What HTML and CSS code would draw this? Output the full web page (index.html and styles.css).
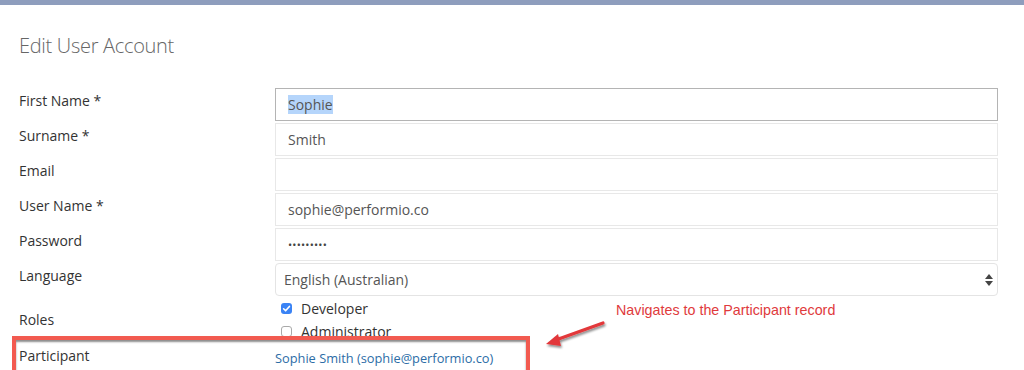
FILE: index.html
```html
<!DOCTYPE html>
<html lang="en">
<head>
    <meta charset="UTF-8">
    <title>Edit User Account</title>
    <link rel="stylesheet" href="styles.css">
</head>
<body>

<div class="topbar"></div>

<div class="page">
    <h1>Edit User Account</h1>

    <form class="user-form">
        <div class="row">
            <label>First Name *</label>
            <div class="field focused"><span class="selected">Sophie</span></div>
        </div>
        <div class="row">
            <label>Surname *</label>
            <div class="field">Smith</div>
        </div>
        <div class="row">
            <label>Email</label>
            <div class="field"></div>
        </div>
        <div class="row">
            <label>User Name *</label>
            <div class="field">sophie@performio.co</div>
        </div>
        <div class="row">
            <label>Password</label>
            <div class="field password">&bull;&bull;&bull;&bull;&bull;&bull;&bull;&bull;&bull;</div>
        </div>
        <div class="row">
            <label>Language</label>
            <div class="field select">
                English (Australian)
                <svg class="select-arrows" width="8" height="12" viewBox="0 0 8 12">
                    <path d="M4 0 L8 5 L0 5 Z" fill="#444"/>
                    <path d="M0 7 L8 7 L4 12 Z" fill="#444"/>
                </svg>
            </div>
        </div>
        <div class="row roles-row">
            <label>Roles</label>
            <div class="roles">
                <div class="role">
                    <span class="checkbox checked">
                        <svg width="11" height="11" viewBox="0 0 11 11"><path d="M2.6 5.8 L4.6 7.8 L8.4 3.4" fill="none" stroke="#fff" stroke-width="1.6" stroke-linecap="round" stroke-linejoin="round"/></svg>
                    </span>
                    Developer
                </div>
                <div class="role">
                    <span class="checkbox"></span>
                    Administrator
                </div>
            </div>
        </div>
        <div class="row participant-row">
            <label>Participant</label>
            <a class="participant-link" href="#">Sophie Smith (sophie@performio.co)</a>
        </div>
    </form>
</div>

<!-- annotation drawn over the screenshot -->
<div class="callout-box"></div>
<svg class="callout-arrow" width="80" height="40" viewBox="0 0 80 40">
    <defs>
        <filter id="shadow" x="-20%" y="-40%" width="140%" height="180%">
            <feDropShadow dx="1" dy="2" stdDeviation="1.2" flood-color="#000" flood-opacity="0.45"/>
        </filter>
    </defs>
    <g filter="url(#shadow)">
        <line x1="72" y1="8" x2="22" y2="26" stroke="#e2383a" stroke-width="3.2" stroke-linecap="round"/>
        <path d="M15 29 L27 19 L30 31 Z" fill="#e2383a"/>
    </g>
</svg>
<div class="callout-text">Navigates to the Participant record</div>

</body>
</html>
```

FILE: styles.css
```css
body {
    margin: 0;
    font-family: 'Open Sans', 'Noto Sans', sans-serif;
    background: #fff;
    color: #333;
    position: relative;
    height: 370px;
    overflow: hidden;
}
.topbar {
    height: 5px;
    background-color: #8e9dbd;
}
.page {
    padding: 0 26px 0 19px;
}
h1 {
    margin: 27px 0 28px 0;
    font-size: 20px;
    line-height: 28px;
    font-weight: 300;
    letter-spacing: -0.3px;
    color: #666;
}
.row {
    display: flex;
    margin-bottom: 2px;
}
.row label {
    flex: 0 0 256px;
    font-size: 14px;
    line-height: 20px;
    padding-top: 3px;
    color: #333;
}
.field {
    flex: 1;
    box-sizing: border-box;
    height: 33px;
    border: 1px solid #e8e8e8;
    padding: 0 12px;
    font-size: 14px;
    line-height: 31px;
    color: #555;
}
.focused {
    border-color: #b4b4b4;
}
.selected {
    background-color: #b5d5fb;
}
.password {
    font-size: 11px;
    letter-spacing: 0.2px;
    color: #444;
}
.select {
    display: flex;
    justify-content: space-between;
    align-items: center;
    padding: 0 4px 0 8px;
    border-radius: 4px;
    border-color: #e4e4e4;
}
.roles-row label {
    display: flex;
    align-items: center;
    padding-top: 0;
}
.roles {
    display: flex;
    flex-direction: column;
}
.role {
    display: flex;
    align-items: center;
    gap: 9px;
    height: 22px;
    padding-left: 6px;
    font-size: 14px;
    color: #333;
}
.role:first-child {
    height: 20px;
    padding-bottom: 2px;
}
.checkbox {
    display: inline-flex;
    box-sizing: border-box;
    width: 11px;
    height: 11px;
    border: 1px solid #a9a9a9;
    border-radius: 3px;
    background: #fff;
}
.checkbox.checked {
    border: none;
    background-color: #3a83f5;
}
.participant-row label {
    padding-top: 2px;
}
.participant-link {
    font-size: 12.8px;
    line-height: 20px;
    padding-top: 4px;
    color: #2c6ca6;
    text-decoration: none;
}
.callout-box {
    position: absolute;
    left: 12px;
    top: 336px;
    width: 510px;
    height: 40px;
    border: 4px solid #f25a50;
    box-shadow: inset 0 2px 2px rgba(0, 0, 0, 0.45);
}
.callout-arrow {
    position: absolute;
    left: 531px;
    top: 315px;
}
.callout-text {
    position: absolute;
    left: 616px;
    top: 302px;
    font-family: 'Liberation Sans', Arial, sans-serif;
    font-size: 14.3px;
    line-height: 16px;
    color: #e03a3c;
}
```
